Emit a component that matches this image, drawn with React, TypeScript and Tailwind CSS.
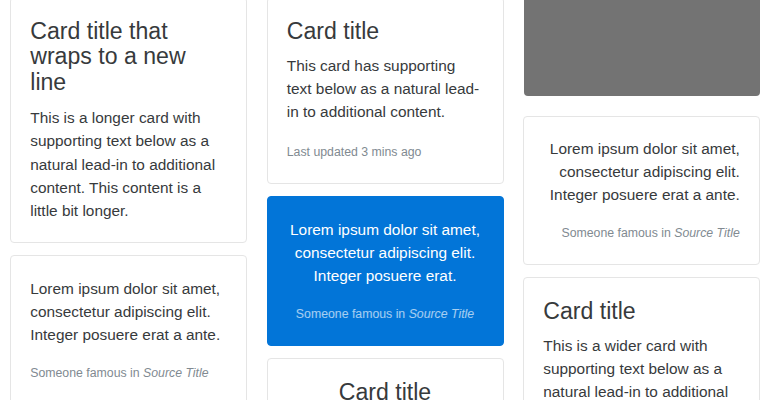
const Quote = ({ text, align, inverse }: { text: string; align: string; inverse?: boolean }) => (
  <div className={align}>
    <p className="mb-[17px]">{text}</p>
    <footer className={inverse ? "text-[12.3px] leading-[21px] text-white/65" : "text-[12.3px] leading-[21px] text-[#818a91]"}>
      Someone famous in <cite title="Source Title">Source Title</cite>
    </footer>
  </div>
);

export default function App() {
  return (
    <div
      className="h-[400px] w-[770px] overflow-hidden bg-white text-[15.4px] leading-[23.2px] text-[#373a3c]"
      style={{ fontFamily: '"Liberation Sans", Arial, sans-serif' }}
    >
      <div className="mt-[-3px] flex items-start gap-[19.5px] px-[10px]">
        {/* column 1 */}
        <div className="flex flex-1 flex-col gap-[12px]">
          <div className="rounded-[4px] border border-[#e5e5e5] px-[19.25px] pt-[20.75px] pb-[19.25px]">
            <h4 className="mb-[11px] text-[23.1px] leading-[25.5px]">Card title that wraps to a new line</h4>
            <p>This is a longer card with supporting text below as a natural lead-in to additional content. This content is a little bit longer.</p>
          </div>
          <div className="rounded-[4px] border border-[#e5e5e5] px-[19.25px] pt-[21px] pb-[19px]">
            <Quote text="Lorem ipsum dolor sit amet, consectetur adipiscing elit. Integer posuere erat a ante." align="text-left" />
          </div>
        </div>

        {/* column 2 */}
        <div className="flex flex-1 flex-col gap-[12px]">
          <div className="rounded-[4px] border border-[#e5e5e5] px-[19.25px] pt-[21px] pb-[18.5px]">
            <h4 className="mb-[9.5px] text-[23.1px] leading-[25.5px]">Card title</h4>
            <p className="mb-[15.4px]">This card has supporting text below as a natural lead-in to additional content.</p>
            <p>
              <small className="text-[12.3px] text-[#818a91]">Last updated 3 mins ago</small>
            </p>
          </div>
          <div className="rounded-[4px] border border-[#0275d8] bg-[#0275d8] px-[19.25px] pt-[21px] pb-[20px] text-white">
            <Quote text="Lorem ipsum dolor sit amet, consectetur adipiscing elit. Integer posuere erat." align="text-center" inverse />
          </div>
          <div className="rounded-[4px] border border-[#e5e5e5] px-[19.25px] pt-[21px] pb-[18.5px] text-center">
            <h4 className="mb-[9.5px] text-[23.1px] leading-[25.5px]">Card title</h4>
            <p className="mb-[15.4px]">This card has supporting text below as a natural lead-in to additional content.</p>
            <p>
              <small className="text-[12.3px] text-[#818a91]">Last updated 3 mins ago</small>
            </p>
          </div>
        </div>

        {/* column 3 */}
        <div className="flex flex-1 flex-col gap-[12px]">
          <div className="mb-[8px] ml-[1px] h-[99px] rounded-[4px] bg-[#737373]" />
          <div className="rounded-[4px] border border-[#e5e5e5] px-[19.25px] pt-[19.5px] pb-[19.5px]">
            <Quote text="Lorem ipsum dolor sit amet, consectetur adipiscing elit. Integer posuere erat a ante." align="text-right" />
          </div>
          <div className="rounded-[4px] border border-[#e5e5e5] px-[19.25px] pt-[21px] pb-[18.5px]">
            <h4 className="mb-[9.5px] text-[23.1px] leading-[25.5px]">Card title</h4>
            <p>This is a wider card with supporting text below as a natural lead-in to additional content. This card has even longer content than the first to show that equal height action.</p>
          </div>
        </div>
      </div>
    </div>
  );
}
